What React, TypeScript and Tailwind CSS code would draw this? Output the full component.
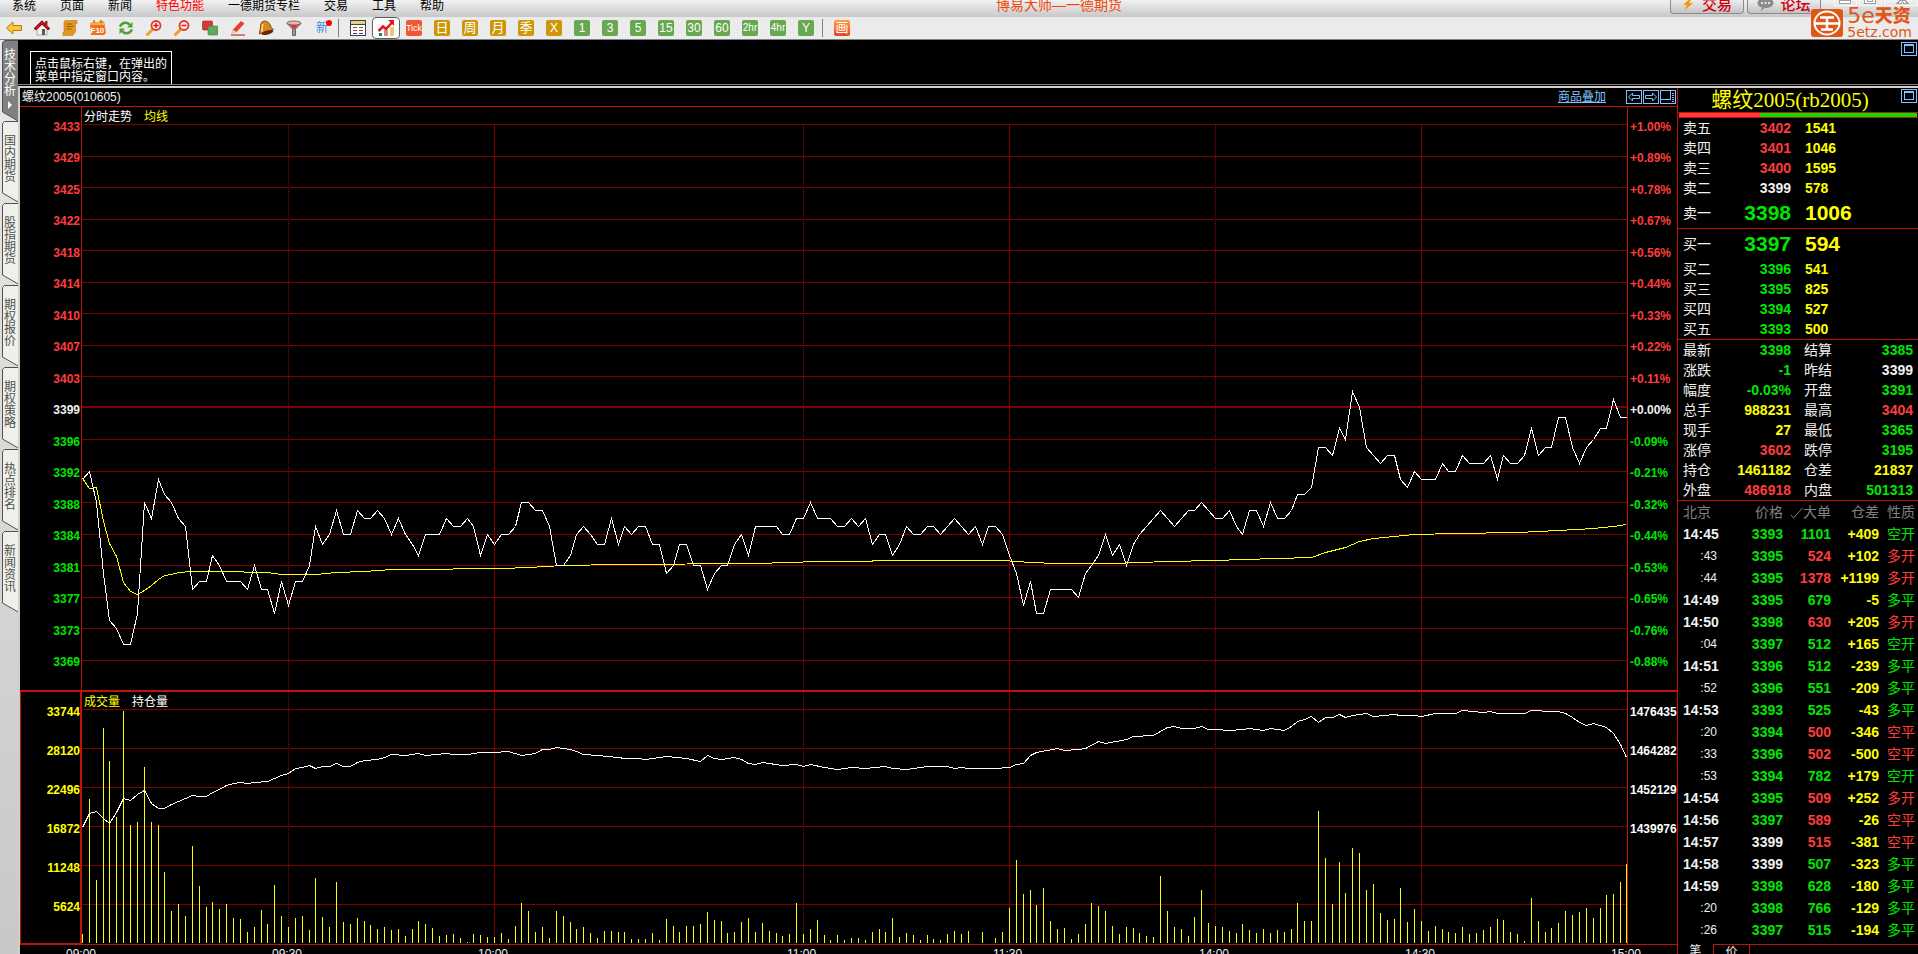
import React from 'react';

type Tone = 'up' | 'down' | 'flat' | 'hot';

const toneClass: Record<Tone, string> = {
  up: 'text-[#ff3c3c]',
  down: 'text-[#00e600]',
  flat: 'text-[#f0f0f0]',
  hot: 'text-[#ffff00]',
};

const PREV_CLOSE = 3399;

const levels = [3433, 3429, 3425, 3422, 3418, 3414, 3410, 3407, 3403, 3399, 3396, 3392, 3388, 3384, 3381, 3377, 3373, 3369];
const percents = ['+1.00%', '+0.89%', '+0.78%', '+0.67%', '+0.56%', '+0.44%', '+0.33%', '+0.22%', '+0.11%', '+0.00%', '-0.09%', '-0.21%', '-0.32%', '-0.44%', '-0.53%', '-0.65%', '-0.76%', '-0.88%'];
const volumeLevels = [33744, 28120, 22496, 16872, 11248, 5624];
const openInterestLevels = [1476435, 1464282, 1452129, 1439976];

// one entry per trading minute, 09:00 - 15:00
const prices = [
  3391, 3392, 3388, 3380, 3374, 3373, 3371, 3371, 3375, 3388, 3386, 3391, 3389, 3388, 3386, 3385, 3378, 3379, 3379, 3382,
  3381, 3379, 3379, 3379, 3378, 3381, 3378, 3378, 3375, 3379, 3376, 3379, 3379, 3381, 3385, 3383, 3384, 3387, 3384, 3384,
  3387, 3386, 3386, 3387, 3386, 3384, 3386, 3384, 3383, 3382, 3384, 3384, 3384, 3386, 3385, 3385, 3386, 3385, 3382, 3384,
  3383, 3384, 3384, 3385, 3388, 3388, 3387, 3387, 3385, 3381, 3381, 3382, 3384, 3385, 3384, 3383, 3383, 3386, 3383, 3385,
  3384, 3385, 3385, 3383, 3383, 3380, 3381, 3383, 3383, 3381, 3381, 3378, 3380, 3381, 3381, 3383, 3384, 3382, 3385, 3385,
  3385, 3385, 3384, 3384, 3386, 3386, 3388, 3386, 3386, 3386, 3385, 3385, 3386, 3385, 3386, 3383, 3384, 3384, 3382, 3383,
  3385, 3384, 3384, 3385, 3385, 3384, 3385, 3386, 3385, 3384, 3385, 3383, 3385, 3385, 3384, 3382, 3380, 3376, 3379, 3375,
  3375, 3378, 3378, 3378, 3378, 3377, 3380, 3381, 3382, 3384, 3382, 3383, 3381, 3383, 3384, 3385, 3386, 3387, 3386, 3385,
  3386, 3387, 3387, 3388, 3387, 3386, 3386, 3387, 3385, 3384, 3387, 3387, 3385, 3388, 3386, 3386, 3387, 3389, 3389, 3390,
  3395, 3395, 3394, 3397, 3396, 3401, 3399, 3395, 3394, 3393, 3394, 3394, 3391, 3390, 3392, 3391, 3391, 3391, 3393, 3392,
  3392, 3394, 3393, 3393, 3393, 3394, 3391, 3394, 3393, 3393, 3394, 3397, 3394, 3395, 3395, 3398, 3398, 3395, 3393, 3395,
  3396, 3397, 3397, 3400, 3398, 3398,
];

// bar heights, one per minute
const volumes = [
  9, 144, 63, 215, 182, 126, 232, 118, 121, 176, 121, 118, 71, 32, 39, 27, 97, 57, 36, 41,
  34, 39, 25, 24, 11, 16, 33, 19, 58, 27, 16, 25, 27, 13, 65, 26, 16, 61, 21, 19,
  25, 22, 18, 14, 16, 13, 14, 7, 14, 22, 19, 15, 7, 8, 9, 5, 1, 9, 8, 6,
  6, 10, 4, 17, 40, 32, 11, 16, 5, 32, 27, 21, 14, 16, 10, 5, 12, 12, 11, 11,
  4, 4, 4, 10, 3, 24, 17, 11, 17, 17, 19, 31, 23, 22, 10, 11, 21, 25, 11, 20,
  12, 10, 7, 9, 40, 9, 14, 23, 8, 3, 8, 3, 5, 5, 3, 11, 14, 11, 25, 6,
  10, 8, 3, 8, 4, 3, 9, 12, 9, 12, 0, 11, 0, 5, 11, 35, 83, 49, 53, 38,
  55, 22, 14, 15, 4, 9, 19, 40, 37, 32, 17, 9, 16, 15, 10, 7, 6, 67, 32, 16,
  14, 7, 26, 53, 20, 17, 16, 12, 10, 19, 13, 10, 14, 10, 13, 11, 14, 40, 22, 22,
  132, 85, 39, 81, 50, 95, 90, 53, 59, 30, 23, 24, 55, 21, 34, 22, 12, 17, 14, 11,
  10, 16, 9, 10, 13, 16, 24, 23, 11, 9, 2, 45, 22, 11, 15, 20, 32, 28, 31, 35,
  25, 35, 48, 49, 61, 79,
];

// [minute, y]
const average: [number, number][] = [
  [0, 478], [1, 488], [2, 487], [3, 521], [4, 543], [5, 556], [6, 582], [7, 591], [8, 594], [9, 590], [10, 585], [11, 579],
  [12, 575], [13, 574], [14, 572], [16, 571], [20, 571], [27, 572], [29, 574], [34, 574], [37, 572], [41, 571], [45, 569],
  [50, 569], [58, 568], [61, 568], [65, 567], [70, 565], [78, 564], [98, 563], [103, 562], [107, 561], [123, 560], [134, 560],
  [138, 562], [142, 563], [150, 563], [158, 561], [165, 560], [169, 559], [174, 558], [179, 557], [181, 552], [184, 547],
  [186, 541], [188, 538], [194, 534], [200, 533], [209, 532], [215, 530], [220, 528], [223, 526], [225, 524],
];

const openInterest: [number, number][] = [
  [0, 827], [1, 813], [2, 811], [3, 818], [4, 823], [5, 812], [6, 798], [7, 800], [8, 794], [9, 790], [10, 803], [11, 808],
  [12, 808], [13, 804], [14, 801], [15, 798], [16, 795], [17, 796], [18, 796], [19, 792], [20, 789], [21, 785], [22, 783],
  [23, 782], [24, 783], [25, 782], [27, 781], [29, 775], [30, 773], [31, 768], [32, 767], [33, 765], [34, 768], [35, 766],
  [36, 766], [37, 763], [38, 766], [39, 766], [40, 762], [41, 760], [43, 759], [44, 757], [45, 754], [47, 755], [49, 753],
  [50, 755], [53, 753], [54, 754], [56, 754], [58, 752], [60, 752], [62, 751], [64, 755], [66, 753], [67, 749], [68, 749],
  [69, 747], [71, 749], [72, 751], [73, 754], [75, 755], [78, 757], [79, 758], [81, 758], [82, 759], [85, 756], [88, 758],
  [90, 761], [91, 755], [92, 758], [93, 759], [95, 757], [96, 759], [97, 763], [98, 764], [99, 762], [102, 765], [104, 764],
  [105, 766], [106, 764], [108, 767], [110, 769], [112, 767], [114, 768], [117, 766], [118, 768], [120, 769], [123, 766],
  [126, 766], [127, 768], [128, 767], [129, 768], [133, 768], [135, 767], [136, 764], [137, 763], [138, 755], [139, 752],
  [142, 748], [143, 750], [145, 749], [146, 748], [148, 741], [149, 743], [152, 739], [153, 736], [156, 735], [158, 727],
  [159, 726], [160, 728], [162, 728], [163, 726], [164, 729], [165, 729], [167, 730], [169, 729], [170, 728], [172, 730],
  [173, 728], [175, 730], [176, 726], [177, 721], [178, 719], [179, 716], [180, 722], [181, 717], [182, 717], [183, 714],
  [184, 717], [185, 715], [187, 713], [188, 716], [191, 714], [192, 715], [194, 715], [195, 716], [197, 713], [200, 713],
  [201, 710], [204, 712], [205, 711], [206, 713], [210, 713], [211, 710], [214, 711], [215, 711], [216, 713], [217, 717],
  [218, 722], [219, 725], [220, 723], [222, 727], [223, 733], [224, 744], [225, 757],
];

const TOTAL_MINUTES = 225;
const PLOT_WIDTH = 1545;
const PRICE_GRID_TOP = 124.5;
const PRICE_GRID_STEP = 31.5;
const VOLUME_BASE = 943;

const minuteX = (m: number) => Math.min(Math.round((m * PLOT_WIDTH) / TOTAL_MINUTES), PLOT_WIDTH - 1) + 0.5;

const gridY = (row: number) =>
  levels[row] === PREV_CLOSE ? 407 : Math.floor(PRICE_GRID_TOP + row * PRICE_GRID_STEP) + 0.5;

// prices are placed between the two nearest axis labels
const priceY = (price: number) => {
  let row = levels.findIndex((level) => level <= price);
  if (row < 1) row = 1;
  const share = (levels[row - 1] - price) / (levels[row - 1] - levels[row]);
  return Math.floor(gridY(row - 1) + share * (gridY(row) - gridY(row - 1))) + 0.5;
};

const toPoints = (list: [number, number][]) => list.map(([m, y]) => `${minuteX(m)},${y + 0.5}`).join(' ');

const hourMarks = [
  { minute: 30, dotted: true },
  { minute: 60, dotted: false },
  { minute: 105, dotted: true },
  { minute: 135, dotted: false },
  { minute: 165, dotted: true },
  { minute: 195, dotted: false },
];

const TimeGrid = ({ top, bottom }: { top: number; bottom: number }) => (
  <>
    {hourMarks.map((mark) => (
      <line
        key={mark.minute}
        x1={minuteX(mark.minute)}
        x2={minuteX(mark.minute)}
        y1={top}
        y2={bottom}
        stroke={mark.dotted ? '#9c0000' : '#800000'}
        strokeDasharray={mark.dotted ? '1 1' : undefined}
      />
    ))}
  </>
);

const axisTone = (price: number): Tone => (price > PREV_CLOSE ? 'up' : price < PREV_CLOSE ? 'down' : 'flat');

const PricePane = () => (
  <div className="flex h-[583px] text-xs font-bold">
    <div className="flex w-[61px] flex-col pt-1 pr-px pb-3 text-right">
      {levels.map((level) => (
        <span key={level} className={`flex flex-1 items-center justify-end ${toneClass[axisTone(level)]}`}>
          {level}
        </span>
      ))}
    </div>
    <div className="relative min-w-0 flex-1 border-l border-[#c01208]">
      <svg className="block h-full w-full" viewBox={`0 107 ${PLOT_WIDTH} 583`} preserveAspectRatio="none" shapeRendering="crispEdges" fill="none">
        {levels.map((level, row) => (
          <line key={level} x1="0" x2={PLOT_WIDTH} y1={gridY(row)} y2={gridY(row)} stroke="#800000" strokeWidth={level === PREV_CLOSE ? 2 : 1} />
        ))}
        <TimeGrid top={125} bottom={690} />
        <polyline points={toPoints(average)} stroke="#ffff00" />
        <polyline points={prices.map((p, m) => `${minuteX(m)},${priceY(p)}`).join(' ')} stroke="#ffffff" />
      </svg>
      <div className="absolute top-0 left-0.5 flex gap-3 text-xs leading-5 font-normal text-white">
        <span>分时走势</span>
        <span className="text-[#ffff00]">均线</span>
      </div>
    </div>
    <div className="flex w-[50px] flex-col border-l border-[#c01208] pt-1 pb-3 pl-0.5">
      {percents.map((percent, row) => (
        <span key={percent} className={`flex flex-1 items-center ${toneClass[axisTone(levels[row])]}`}>
          {percent}
        </span>
      ))}
    </div>
  </div>
);

const VolumePane = () => (
  <div className="flex h-[255px] border-t-2 border-b border-[#c01208] text-xs font-bold">
    <div className="flex w-[61px] flex-col border-r border-b border-l border-[#c01208] text-[#ffff00]">
      {volumeLevels.map((level) => (
        <span key={level} className="flex h-[39px] items-center justify-end">
          {level}
        </span>
      ))}
    </div>
    <div className="relative min-w-0 flex-1 border-l border-[#c01208]">
      <svg className="block h-full w-full" viewBox={`0 692 ${PLOT_WIDTH} 252`} preserveAspectRatio="none" shapeRendering="crispEdges" fill="none">
        {volumeLevels.map((level, row) => (
          <line key={level} x1="0" x2={PLOT_WIDTH} y1={709.5 + row * 39} y2={709.5 + row * 39} stroke="#800000" />
        ))}
        <TimeGrid top={692} bottom={944} />
        {volumes.map((height, m) => (
          <line key={m} x1={minuteX(m)} x2={minuteX(m)} y1={VOLUME_BASE - height} y2={VOLUME_BASE} stroke="#ffff00" />
        ))}
        <polyline points={toPoints(openInterest)} stroke="#ffffff" />
      </svg>
      <div className="absolute top-0 left-0.5 flex gap-3 text-xs leading-5 font-normal text-white">
        <span className="text-[#ffff00]">成交量</span>
        <span>持仓量</span>
      </div>
    </div>
    <div className="flex w-[50px] flex-col border-l border-[#c01208] pl-0.5 text-white">
      {openInterestLevels.map((level) => (
        <span key={level} className="flex h-[39px] items-center">
          {level}
        </span>
      ))}
    </div>
  </div>
);

const TimeAxis = () => (
  <div className="mr-[50px] ml-[62px] grid grid-cols-[30fr_30fr_45fr_30fr_30fr_30fr_30fr] text-xs leading-[18px] text-[#f0f0f0]">
    {['09:00', '09:30', '10:00', '11:00', '11:30', '14:00'].map((time) => (
      <span key={time} className="w-0">
        <span className="-ml-4">{time}</span>
      </span>
    ))}
    <span className="flex justify-between">
      <span className="-ml-4">14:30</span>
      <span className="-mr-3.5">15:00</span>
    </span>
  </div>
);

const asks = [
  { label: '卖五', price: 3402, lots: 1541, tone: 'up' },
  { label: '卖四', price: 3401, lots: 1046, tone: 'up' },
  { label: '卖三', price: 3400, lots: 1595, tone: 'up' },
  { label: '卖二', price: 3399, lots: 578, tone: 'flat' },
  { label: '卖一', price: 3398, lots: 1006, tone: 'down' },
];

const bids = [
  { label: '买一', price: 3397, lots: 594, tone: 'down' },
  { label: '买二', price: 3396, lots: 541, tone: 'down' },
  { label: '买三', price: 3395, lots: 825, tone: 'down' },
  { label: '买四', price: 3394, lots: 527, tone: 'down' },
  { label: '买五', price: 3393, lots: 500, tone: 'down' },
];

const stats: [string, string, Tone, string, string, Tone][] = [
  ['最新', '3398', 'down', '结算', '3385', 'down'],
  ['涨跌', '-1', 'down', '昨结', '3399', 'flat'],
  ['幅度', '-0.03%', 'down', '开盘', '3391', 'down'],
  ['总手', '988231', 'hot', '最高', '3404', 'up'],
  ['现手', '27', 'hot', '最低', '3365', 'down'],
  ['涨停', '3602', 'up', '跌停', '3195', 'down'],
  ['持仓', '1461182', 'hot', '仓差', '21837', 'hot'],
  ['外盘', '486918', 'up', '内盘', '501313', 'down'],
];

const ticks: [string, number, number, string, string, Tone][] = [
  ['14:45', 3393, 1101, '+409', '空开', 'down'],
  [':43', 3395, 524, '+102', '多开', 'up'],
  [':44', 3395, 1378, '+1199', '多开', 'up'],
  ['14:49', 3395, 679, '-5', '多平', 'down'],
  ['14:50', 3398, 630, '+205', '多开', 'up'],
  [':04', 3397, 512, '+165', '空开', 'down'],
  ['14:51', 3396, 512, '-239', '多平', 'down'],
  [':52', 3396, 551, '-209', '多平', 'down'],
  ['14:53', 3393, 525, '-43', '多平', 'down'],
  [':20', 3394, 500, '-346', '空平', 'up'],
  [':33', 3396, 502, '-500', '空平', 'up'],
  [':53', 3394, 782, '+179', '空开', 'down'],
  ['14:54', 3395, 509, '+252', '多开', 'up'],
  ['14:56', 3397, 589, '-26', '空平', 'up'],
  ['14:57', 3399, 515, '-381', '空平', 'up'],
  ['14:58', 3399, 507, '-323', '多平', 'down'],
  ['14:59', 3398, 628, '-180', '多平', 'down'],
  [':20', 3398, 766, '-129', '多平', 'down'],
  [':26', 3397, 515, '-194', '多平', 'down'],
];

const DepthTable = ({ rows, best }: { rows: typeof asks; best: string }) => (
  <table className="w-full table-fixed border-b border-[#c01208]">
    <tbody>
      {rows.map((row) => (
        <tr key={row.label} className={row.label === best ? 'h-[30px]' : 'h-5'}>
          <th className="w-[45px] p-0 pl-[5px] text-left font-normal text-[#f0f0f0]">{row.label}</th>
          <td className={`w-[68px] p-0 text-right font-bold ${row.label === best ? 'text-[21px]' : ''} ${toneClass[row.tone as Tone]}`}>{row.price}</td>
          <td className={`p-0 pl-3.5 font-bold text-[#ffff00] ${row.label === best ? 'text-[21px]' : ''}`}>{row.lots}</td>
        </tr>
      ))}
    </tbody>
  </table>
);

const MaximizeIcon = () => (
  <svg width="16" height="14" viewBox="0 0 16 14" fill="none" stroke="#80c0ff" shapeRendering="crispEdges">
    <rect x="0.5" y="0.5" width="15" height="13" />
    <rect x="3.5" y="2.5" width="9" height="8" />
    <path d="M3 3.5h10" />
  </svg>
);

const QuotePanel = () => (
  <aside className="w-[241px] shrink-0 border-l border-[#c01208] text-sm leading-5">
    <div className="relative flex h-6 items-center justify-center">
      <h2 className="pr-4 font-['Liberation_Serif','Noto_Sans_CJK_SC',serif] text-[21px] leading-6 text-[#ffff00]">螺纹2005(rb2005)</h2>
      <button className="absolute top-px right-px" aria-label="最大化">
        <MaximizeIcon />
      </button>
    </div>
    <div className="flex h-1.5 border-y border-[#c01208] px-px">
      <div className="w-[34%] bg-[#ff3c3c]" />
      <div className="flex-1 bg-[#00e600]" />
    </div>
    <DepthTable rows={asks} best="卖一" />
    <DepthTable rows={bids} best="买一" />
    <table className="w-full table-fixed border-b border-[#c01208]">
      <tbody>
        {stats.map(([label, value, tone, label2, value2, tone2]) => (
          <tr key={label} className="h-5">
            <th className="w-[45px] p-0 pl-[5px] text-left font-normal text-[#f0f0f0]">{label}</th>
            <td className={`w-[68px] p-0 text-right font-bold ${toneClass[tone]}`}>{value}</td>
            <th className="w-[45px] p-0 pl-[13px] text-left font-normal text-[#f0f0f0]">{label2}</th>
            <td className={`p-0 pr-[5px] text-right font-bold ${toneClass[tone2]}`}>{value2}</td>
          </tr>
        ))}
      </tbody>
    </table>
    <table className="mb-[3px] w-full table-fixed">
      <thead>
        <tr className="h-[22px] text-[#808080]">
          <th className="w-[43px] p-0 pl-[5px] text-left font-normal">北京</th>
          <th className="w-[62px] p-0 text-right font-normal">价格</th>
          <th className="w-12 p-0 text-right font-normal whitespace-nowrap">
            <svg className="inline-block" width="13" height="14" viewBox="0 0 13 14" fill="none" stroke="#808080">
              <path d="m1 9 2.500 3L12.500 2" />
            </svg>
            大单
          </th>
          <th className="w-12 p-0 text-right font-normal">仓差</th>
          <th className="p-0 pr-[3px] text-right font-normal">性质</th>
        </tr>
      </thead>
      <tbody>
        {ticks.map(([time, price, lots, change, kind, tone], idx) => (
          <tr key={idx} className="h-[22px]">
            <td className={`p-0 text-[#f0f0f0] ${time.startsWith(':') ? 'pr-1 text-right text-xs' : 'pl-[5px] font-bold'}`}>{time}</td>
            <td className={`p-0 text-right font-bold ${toneClass[axisTone(price)]}`}>{price}</td>
            <td className={`p-0 text-right font-bold ${toneClass[tone]}`}>{lots}</td>
            <td className="p-0 text-right font-bold text-[#ffff00]">{change}</td>
            <td className={`p-0 pr-[3px] text-right ${toneClass[tone]}`}>{kind}</td>
          </tr>
        ))}
      </tbody>
    </table>
    <div className="flex text-xs leading-[15px] text-[#f0f0f0]">
      <button className="w-9 border-r border-[#c01208]">笔</button>
      <button className="w-9 border-t border-r border-[#c01208]">价</button>
      <div className="flex-1 border-t border-[#c01208]" />
    </div>
  </aside>
);

const menus = ['系统', '页面', '新闻', '特色功能', '一德期货专栏', '交易', '工具', '帮助'];

const MenuBar = () => (
  <header className="relative flex h-[17px] items-start bg-gradient-to-b from-[#f2f2f2] to-[#c8c8c8] text-xs leading-3 text-black">
    <nav className="flex gap-6 pl-3">
      {menus.map((menu) => (
        <button key={menu} className={menu === '特色功能' ? 'text-[#ff0000]' : ''}>
          {menu}
        </button>
      ))}
    </nav>
    <h1 className="absolute inset-x-0 top-0 pl-[200px] text-center text-sm leading-[10px] text-[#f04808]">博易大师—一德期货</h1>
    <div className="relative ml-auto flex gap-[3px]">
      <button className="flex h-3.5 w-[74px] items-center justify-center gap-2 rounded-b border border-t-0 border-[#8c8c8c] bg-gradient-to-b from-[#ececec] to-[#c4c4c4] pb-1 text-[15px] leading-3 font-medium text-[#d00010]">
        <svg width="12" height="14" viewBox="0 0 12 14">
          <path d="M9 0 1 7h4l-3 6 9-8H7l3-5z" fill="#f09010" stroke="#fbc860" strokeWidth="0.6" />
        </svg>
        交易
      </button>
      <button className="flex h-3.5 w-[74px] items-center justify-center gap-1.5 rounded-b border border-t-0 border-[#8c8c8c] bg-gradient-to-b from-[#ececec] to-[#c4c4c4] pb-1 text-[15px] leading-3 font-medium text-[#d00010]">
        <svg width="17" height="14" viewBox="0 0 17 14">
          <path d="M8.500 0C4 0 .5 2 .5 5s2.500 4 4.500 4.500L3.500 13 8 10c5 0 8.500-2 8.500-5S13 0 8.500 0z" fill="#8c8c8c" />
          <g fill="#fff">
            <circle cx="5" cy="5" r="1" />
            <circle cx="8.500" cy="5" r="1" />
            <circle cx="12" cy="5" r="1" />
          </g>
        </svg>
        论坛
      </button>
      <svg className="ml-[7px]" width="87" height="17" viewBox="0 0 87 17" fill="none" stroke="#f6f6f6" shapeRendering="crispEdges">
        <path d="M3.500 0v5h22V0M28.500 0v5h22V0M53.500 0v5h33V0" />
        <g stroke="#a0a0a0">
          <path d="M8.500 0v3.500h11V0zM33.500 0v3.500h11V0M36.500 0v1.500h5V0" fill="#fff" />
          <path d="M66 3.500h4l1.500-2 1.500 2h4L73.500 0h-4z" fill="#fff" />
        </g>
      </svg>
    </div>
    <a href="#" className="absolute top-[7px] right-1.5 z-10 flex items-center gap-1 text-[#e05818]">
      <svg width="32" height="28" viewBox="0 0 32 28">
        <rect width="32" height="28" rx="3" fill="#e05818" />
        <g fill="none" stroke="#fff">
          <ellipse cx="16" cy="14" rx="12.500" ry="11.500" strokeWidth="2" />
          <path d="M9 8.500h14M4 14.500h24M16 8.500v12M10 20.500h12" strokeWidth="2.500" />
        </g>
      </svg>
      <span className="flex flex-col font-['DejaVu_Sans','Noto_Sans_CJK_SC',sans-serif]">
        <span className="flex items-center text-[22px] leading-[18px]">
          5e<span className="text-lg leading-[18px] font-black">天资</span>
        </span>
        <span className="text-sm leading-[14px]">5etz.com</span>
      </span>
    </a>
  </header>
);

const toolIcons: { name: string; art: React.ReactNode }[] = [
  {
    name: '后退',
    art: <path d="M.5 8 7 2v3.500h8.500v5H7V14z" fill="#fcc830" stroke="#b87818" />,
  },
  {
    name: '首页',
    art: (
      <>
        <path d="M3 8v7h10V8L8 3z" fill="#f4f0ec" stroke="#a09890" strokeWidth="0.8" />
        <path d="M11 1h2.500v4H11z" fill="#a02818" />
        <path d="M.5 8.500 8 1l7.500 7.500-1.500 1L8 4 2 9.500z" fill="#d82028" stroke="#901018" strokeWidth="1.200" />
        <path d="M8 9h3v6H8z" fill="#585858" />
      </>
    ),
  },
  {
    name: '资讯',
    art: (
      <>
        <path d="M3 .5h12v3h-1.500V12l-3 3.500H1V12h1V2z" fill="#e09820" stroke="#c07c10" strokeWidth="0.6" />
        <path d="M4.500 4h6M4.500 6.500h7M4.500 9h5" stroke="#9c5c08" />
      </>
    ),
  },
  {
    name: 'F10',
    art: (
      <>
        <path d="M0 3 14 1l2 12-2 2H1z" fill="#f07020" />
        <path d="M0 3 14 1v4H0z" fill="#f8b040" />
        <path d="M4 0v3M11 0v3" stroke="#a04008" />
        <text x="0.500" y="13" fontSize="8" fontWeight="bold" fill="#fff">F10</text>
      </>
    ),
  },
  {
    name: '刷新',
    art: (
      <g fill="none" stroke="#50a030" strokeWidth="2.500">
        <path d="M2 6.500C4 2 9.500 1.500 12 5M14 9.500C12 14 6.500 14.500 4 11" />
        <path d="M14.500 2v5.500H9zM1.500 14V8.500H7z" fill="#50a030" stroke="none" />
      </g>
    ),
  },
  {
    name: '放大',
    art: (
      <>
        <path d="m1.500 14.500 5-5" stroke="#f0a020" strokeWidth="3" strokeLinecap="round" />
        <circle cx="10" cy="5.500" r="4.500" fill="#ffeeea" stroke="#e03828" strokeWidth="1.800" />
        <path d="M7.500 5.500h5M10 3v5" stroke="#e01818" strokeWidth="1.500" />
      </>
    ),
  },
  {
    name: '缩小',
    art: (
      <>
        <path d="m1.500 14.500 5-5" stroke="#f0a020" strokeWidth="3" strokeLinecap="round" />
        <circle cx="10" cy="5.500" r="4.500" fill="#ffeeea" stroke="#e03828" strokeWidth="1.800" />
        <path d="M7.500 5.500h5" stroke="#e01818" strokeWidth="1.500" />
      </>
    ),
  },
  {
    name: '叠加',
    art: (
      <>
        <rect x="0.500" y="1" width="10" height="9" rx="1" fill="#d83838" stroke="#a02020" strokeWidth="0.6" />
        <rect x="6" y="6" width="10" height="9" rx="1" fill="#60a860" stroke="#408040" strokeWidth="0.6" />
      </>
    ),
  },
  {
    name: '画线',
    art: (
      <>
        <path d="M1 15h14" stroke="#c83028" strokeWidth="1.200" />
        <path d="m1.500 13.500 1.500-4L11 1l3.500 2.500-8 8.500z" fill="#e84030" />
        <path d="m1.500 13.500 1.500-4 3.500 2.500z" fill="#f4d0a0" />
      </>
    ),
  },
  {
    name: '预警',
    art: (
      <>
        <path d="M4 2c3-2 6.500-.5 8 2.500 1 2.500 1.500 3.500 3.500 5L1.500 14c0-3 1-5 1-7.500 0-2 .5-3.500 1.500-4.500z" fill="#d88820" stroke="#803808" strokeWidth="0.9" />
        <path d="M5 4c-1.500 2 0 4-1.500 7.500" stroke="#fce090" strokeWidth="1.500" fill="none" />
        <ellipse cx="9.500" cy="12.500" rx="6" ry="2" transform="rotate(-15 9.500 12.500)" fill="#602808" />
      </>
    ),
  },
  {
    name: '过滤',
    art: (
      <>
        <path d="M1 3.500 6.500 9v6.500h3V9L15 3.500z" fill="#989898" stroke="#505050" strokeWidth="0.8" />
        <path d="M3.500 4h9L8.500 9h-1z" fill="#e83030" />
        <ellipse cx="8" cy="3" rx="7" ry="2" fill="#f4b0a8" stroke="#585858" strokeWidth="0.8" />
      </>
    ),
  },
];

const periods = [
  { label: 'Tick', look: 'bg-[#f05830] text-[9px]' },
  { label: '日', look: 'bg-[#cc9808] text-[13px]' },
  { label: '周', look: 'bg-[#cc9808] text-[13px]' },
  { label: '月', look: 'bg-[#cc9808] text-[13px]' },
  { label: '季', look: 'bg-[#cc9808] text-[13px]' },
  { label: 'X', look: 'bg-[#cc9808] text-xs' },
  { label: '1', look: 'bg-[#68a850] text-xs' },
  { label: '3', look: 'bg-[#68a850] text-xs' },
  { label: '5', look: 'bg-[#68a850] text-xs' },
  { label: '15', look: 'bg-[#68a850] text-xs' },
  { label: '30', look: 'bg-[#68a850] text-xs' },
  { label: '60', look: 'bg-[#68a850] text-xs' },
  { label: '2hr', look: 'bg-[#68a850] text-[10px]' },
  { label: '4hr', look: 'bg-[#68a850] text-[10px]' },
  { label: 'Y', look: 'bg-[#68a850] text-xs' },
];

const Divider = () => <span className="mr-[5px] ml-0.5 h-[18px] w-px bg-[#808080]" />;

const Toolbar = () => (
  <div className="flex h-[23px] items-center border-b border-[#808080] bg-[#ebebeb]">
    {toolIcons.map((tool) => (
      <button key={tool.name} className="flex w-7 justify-center" aria-label={tool.name}>
        <svg width="16" height="16" viewBox="0 0 16 16">
          {tool.art}
        </svg>
      </button>
    ))}
    <button className="relative flex w-7 justify-center text-xs leading-4 text-[#3c8ce0]">
      新
      <span className="absolute top-0 right-1 size-1.5 rounded-full bg-[#ff0000]" />
    </button>
    <Divider />
    <button className="flex w-7 justify-center" aria-label="报价">
      <svg width="16" height="16" viewBox="0 0 16 16" shapeRendering="crispEdges">
        <path d="M.5.5h15v15H.5z" fill="#fff" stroke="#404040" />
        <path d="M1 2.500h14" stroke="#e8d080" strokeWidth="3" />
        <path d="M1 4.500h14" stroke="#404040" />
        <path d="M3 7.500h4M9 7.500h4" stroke="#208040" />
        <path d="M3 10.500h4M9 10.500h4" stroke="#d02020" />
        <path d="M3 13.500h4M9 13.500h4" stroke="#2040a0" />
      </svg>
    </button>
    <button className="flex h-[22px] w-7 items-center justify-center rounded-sm border border-[#606060] bg-white" aria-label="分时">
      <svg width="18" height="18" viewBox="0 0 18 18">
        <path d="M2 14h3v3H2z" fill="#208838" />
        <path d="M7 11h4v6H7z" fill="#d88888" />
        <path d="M13 8h4v9h-4z" fill="#e8c870" />
        <path d="M1.500 12 6 7.500l3 2.500 7-7.500" fill="none" stroke="#e01818" strokeWidth="2.500" />
        <path d="M11 1h6v6z" fill="#e01818" />
      </svg>
    </button>
    {periods.map((period) => (
      <button key={period.label} className="flex w-7 justify-center">
        <span className={`flex size-4 items-center justify-center rounded-xs leading-4 text-white ${period.look}`}>{period.label}</span>
      </button>
    ))}
    <Divider />
    <button className="flex w-7 justify-center">
      <span className="flex size-4 items-center justify-center rounded-xs bg-gradient-to-b from-[#fca040] to-[#f03820] text-[13px] leading-4 text-white">画</span>
    </button>
  </div>
);

const sideTabs = ['技术分析', '国内期货', '股指期货', '期权报价', '期权策略', '热点排名', '新闻资讯'];

const SideTabs = () => (
  <nav className="w-[18px] shrink-0 bg-gradient-to-b from-[#e8e8e8] to-[#c8c8c8] pl-0.5">
    {sideTabs.map((tab, idx) => (
      <button key={tab} className={`relative flex w-4 flex-col items-center text-xs leading-3 ${idx === 0 ? 'h-[81px] pt-[9px] text-white' : 'h-[82px] pt-3.5 text-[#505050]'}`}>
        <svg className="absolute inset-0" width="16" height="82" viewBox="0 0 16 82">
          <path d="M17 .5H2.500l-2 2V72L17 81.500z" fill={idx === 0 ? '#808080' : '#f0f0ea'} stroke="#505050" />
        </svg>
        <span className="relative w-3 break-all">{tab}</span>
        {idx === 0 && (
          <svg className="relative mt-1" width="6" height="8" viewBox="0 0 6 8">
            <path d="M1 0v8l4-4z" fill="#fff" />
          </svg>
        )}
      </button>
    ))}
  </nav>
);

const NavIcon = ({ name, d }: { name: string; d: string }) => (
  <button aria-label={name}>
    <svg width="16" height="14" viewBox="0 0 16 14" fill="none" stroke="#80c0ff">
      <rect x="0.500" y="0.500" width="15" height="13" shapeRendering="crispEdges" />
      <path d={d} />
    </svg>
  </button>
);

const ChartTitle = () => (
  <div className="flex h-[19px] items-center border-b border-[#c01208] pr-px pl-0.5 text-xs leading-[18px] text-[#f0f0f0]">
    <span>螺纹2005(010605)</span>
    <a href="#" className="mr-5 ml-auto text-[#80c0ff] underline">
      商品叠加
    </a>
    <span className="flex gap-px">
      <NavIcon name="上一个" d="M2.500 7 6.500 3v2.500h7v3h-7V11z" />
      <NavIcon name="下一个" d="M13.500 7 9.500 3v2.500h-7v3h7V11z" />
      <NavIcon name="布局" d="M1 9.500h9M10.500 1v9M12 3.500h2M12 5.500h2M12 7.500h2M12 9.500h2M12 11.500h2" />
    </span>
  </div>
);

export default function App() {
  return (
    <div className="flex h-screen flex-col overflow-hidden bg-black font-['Liberation_Sans','Noto_Sans_CJK_SC',sans-serif]">
      <MenuBar />
      <Toolbar />
      <div className="flex min-h-0 flex-1">
        <SideTabs />
        <main className="flex min-w-0 flex-1 flex-col">
          <section className="flex h-[45px] shrink-0 items-start justify-between overflow-hidden border-b border-[#808080] pr-px pl-3">
            <p className="mt-[11px] w-[142px] border border-b-0 border-white px-1 pt-1.5 pb-4 text-xs leading-[13px] text-white">
              点击鼠标右键，在弹出的菜单中指定窗口内容。
            </p>
            <button className="mt-0.5" aria-label="最大化">
              <MaximizeIcon />
            </button>
          </section>
          <div className="mt-px flex min-h-0 flex-1 items-start border-t-2 border-l-2 border-[#d4d0c8]">
            <section className="min-w-0 flex-1">
              <ChartTitle />
              <PricePane />
              <VolumePane />
              <TimeAxis />
            </section>
            <QuotePanel />
          </div>
        </main>
      </div>
    </div>
  );
}
